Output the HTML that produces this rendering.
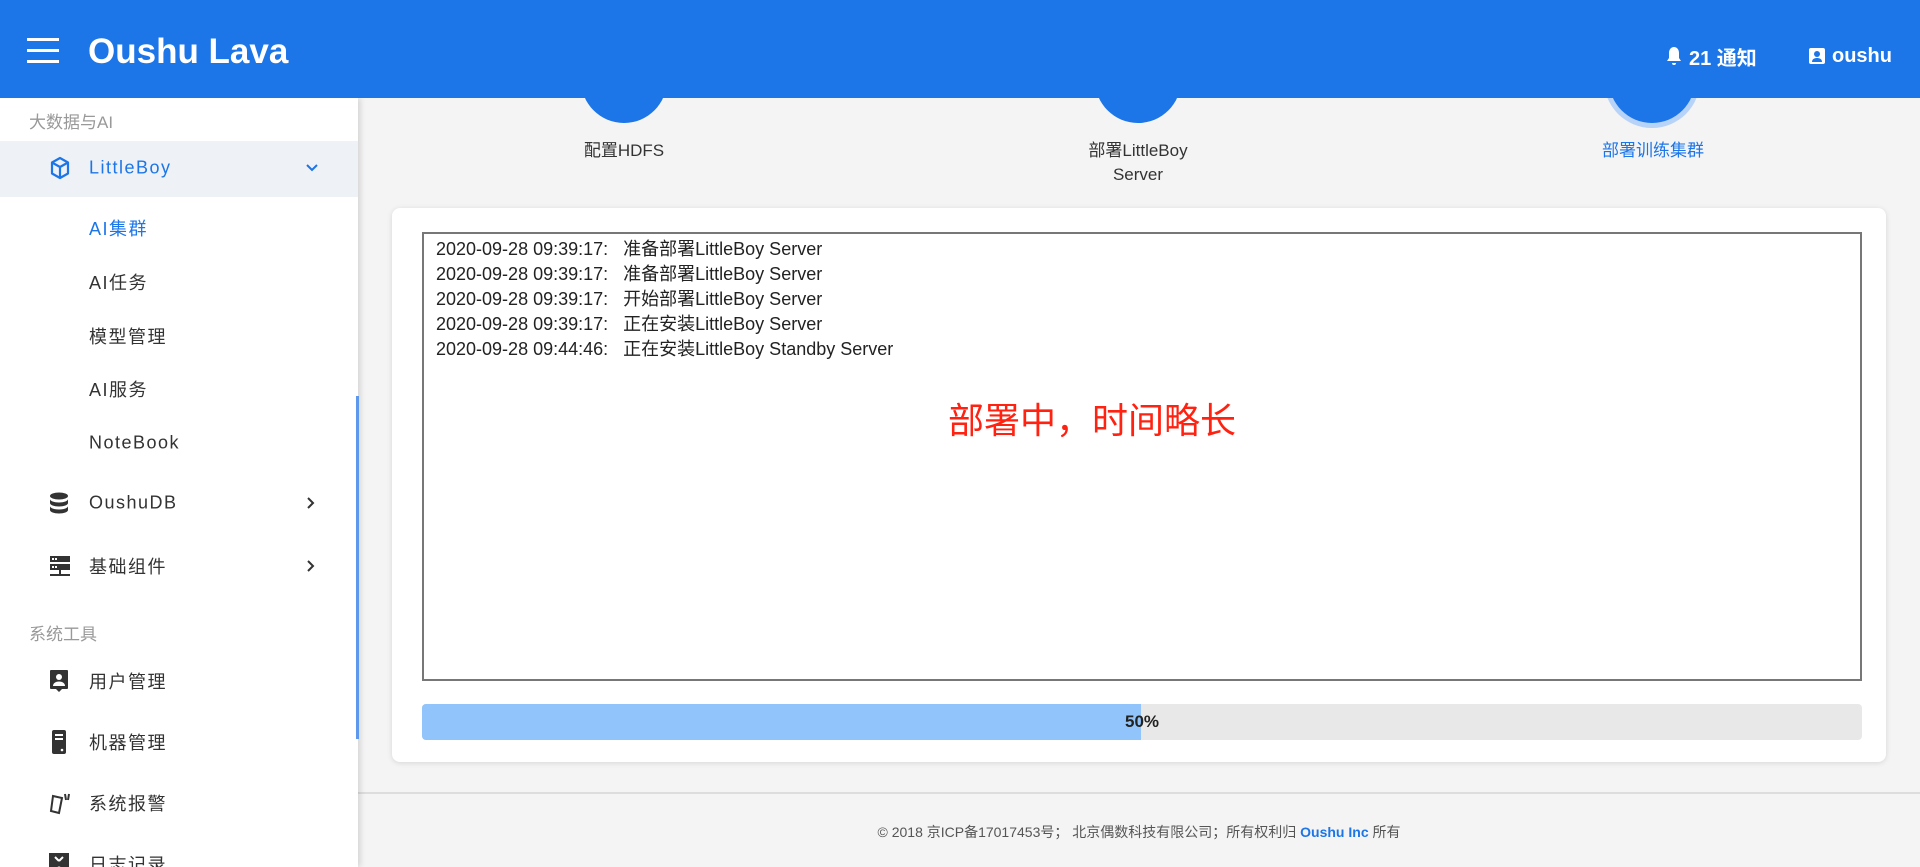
<!DOCTYPE html>
<html><head><meta charset="utf-8"><style>
*{margin:0;padding:0;box-sizing:border-box}
body{width:1920px;height:867px;overflow:hidden;background:#f4f4f4;font-family:"Liberation Sans","Noto Sans CJK SC",sans-serif;position:relative}
.hdr{position:absolute;left:0;top:0;width:1920px;height:98px;background:#1c76e8;color:#fff;z-index:3}
.ham{position:absolute;left:27px;top:38px;width:32px}
.ham i{display:block;height:3px;background:#fff;margin-bottom:8px}
.logo{position:absolute;left:88px;top:32px;font-size:35px;font-weight:bold}
.hr{position:absolute;top:44px;height:24px;font-size:20px;font-weight:bold;display:flex;align-items:center;gap:6px}
.side{position:absolute;left:0;top:98px;width:358px;height:769px;background:#fff;box-shadow:2px 0 6px rgba(0,0,0,.15);z-index:2;overflow:hidden}
.sb{position:absolute;left:356px;top:396px;width:3px;height:343px;background:#5d98ec}
.grp{position:absolute;left:29px;font-size:17px;color:#999}
.it{position:absolute;left:89px;font-size:18px;color:#333;letter-spacing:1.5px;transform:translateY(-50%)}
.ic{position:absolute;left:49px;transform:translateY(-50%)}
.chev{position:absolute;left:304px;transform:translateY(-50%)}
.circ{position:absolute;width:86px;height:86px;border-radius:50%;background:#1c76e8;top:37px;z-index:1}
.lbl{position:absolute;font-size:17px;color:#333;text-align:center;line-height:24px;transform:translateX(-50%)}
.card{position:absolute;left:392px;top:208px;width:1494px;height:554px;background:#fff;border-radius:8px;box-shadow:0 1px 6px rgba(0,0,0,.12)}
.log{position:absolute;left:422px;top:232px;width:1440px;height:449px;border:2px solid #777;background:#fff}
.ln{position:absolute;left:12px;font-size:18px;color:#222;white-space:pre}
.red{position:absolute;left:-52px;width:1440px;text-align:center;top:158px;font-size:36px;color:#f21}
.bar{position:absolute;left:422px;top:704px;width:1440px;height:36px;background:#e8e8e8;border-radius:4px;overflow:hidden}
.fill{position:absolute;left:0;top:0;width:719px;height:36px;background:#90c4fa}
.pct{position:absolute;left:0;width:1440px;text-align:center;top:8px;font-size:17px;font-weight:bold;color:#222}
.foot{position:absolute;left:358px;top:792px;width:1562px;height:75px;border-top:2px solid #ddd;text-align:center;font-size:14px;color:#555;padding-top:28px}
</style></head><body>
<div class="hdr">
<div class="ham"><i></i><i></i><i></i></div>
<div class="logo">Oushu Lava</div>
<div class="hr" style="left:1665px"><svg width="18" height="20" viewBox="0 0 18 20"><path d="M9 1c-3 0-5 2.5-5 6v5l-2 3h14l-2-3V7c0-3.5-2-6-5-6zM7 17a2 2 0 0 0 4 0z" fill="#fff"/></svg><span>21 通知</span></div>
<div class="hr" style="left:1808px"><svg width="18" height="18" viewBox="0 0 18 18"><rect x="1" y="1" width="16" height="16" rx="2" fill="#fff"/><circle cx="9" cy="7" r="3" fill="#1c76e8"/><path d="M4 15c0-3 2.5-4 5-4s5 1 5 4z" fill="#1c76e8"/></svg><span>oushu</span></div>
</div>
<div class="side">
<div class="grp" style="top:10px">大数据与AI</div>
<div style="position:absolute;left:0;top:43px;width:358px;height:56px;background:#eef1f5"></div>
<svg class="ic" style="top:70px" width="22" height="24" viewBox="0 0 22 24"><path d="M11 2l8 4.5v11L11 22l-8-4.5v-11zM3 6.5l8 4.5 8-4.5M11 11v11" fill="none" stroke="#1c76e8" stroke-width="2.2" stroke-linejoin="round"/></svg>
<div class="it" style="top:70px;color:#1c76e8">LittleBoy</div>
<svg class="chev" style="top:70px" width="16" height="12" viewBox="0 0 16 12"><path d="M3 3l5 5 5-5" fill="none" stroke="#1c76e8" stroke-width="2"/></svg>
<div class="it" style="top:130px;left:89px;color:#1c76e8">AI集群</div>
<div class="it" style="top:184px">AI任务</div>
<div class="it" style="top:238px">模型管理</div>
<div class="it" style="top:291px">AI服务</div>
<div class="it" style="top:345px">NoteBook</div>
<svg class="ic" style="top:405px" width="20" height="22" viewBox="0 0 20 22"><ellipse cx="10" cy="4" rx="9" ry="3.5" fill="#333"/><path d="M1 7c0 2 4 3.5 9 3.5s9-1.5 9-3.5v4c0 2-4 3.5-9 3.5S1 13 1 11zM1 14c0 2 4 3.5 9 3.5s9-1.5 9-3.5v4c0 2-4 3.5-9 3.5S1 20 1 18z" fill="#333"/></svg>
<div class="it" style="top:405px">OushuDB</div>
<svg class="chev" style="top:405px" width="12" height="16" viewBox="0 0 12 16"><path d="M4 3l5 5-5 5" fill="none" stroke="#333" stroke-width="2"/></svg>
<svg class="ic" style="top:468px" width="22" height="22" viewBox="0 0 22 22"><rect x="1" y="1" width="20" height="6" fill="#333"/><rect x="1" y="9" width="20" height="6" fill="#333"/><rect x="3" y="3" width="2" height="2" fill="#fff"/><rect x="6" y="3" width="2" height="2" fill="#fff"/><rect x="3" y="11" width="2" height="2" fill="#fff"/><rect x="6" y="11" width="2" height="2" fill="#fff"/><path d="M11 15v4M1 20h20" stroke="#333" stroke-width="2"/></svg>
<div class="it" style="top:468px">基础组件</div>
<svg class="chev" style="top:468px" width="12" height="16" viewBox="0 0 12 16"><path d="M4 3l5 5-5 5" fill="none" stroke="#333" stroke-width="2"/></svg>
<div class="grp" style="top:522px">系统工具</div>
<svg class="ic" style="top:583px" width="20" height="24" viewBox="0 0 20 24"><path d="M2 1h16a1 1 0 0 1 1 1v17a1 1 0 0 1-1 1h-5l-3 3-3-3H2a1 1 0 0 1-1-1V2a1 1 0 0 1 1-1z" fill="#333"/><circle cx="10" cy="8" r="3" fill="#fff"/><path d="M4 17c0-3 3-4.5 6-4.5s6 1.5 6 4.5z" fill="#fff"/></svg>
<div class="it" style="top:583px">用户管理</div>
<svg class="ic" style="top:644px;left:52px" width="14" height="24" viewBox="0 0 14 24"><rect x="0" y="0" width="14" height="24" rx="2" fill="#333"/><rect x="3" y="4" width="8" height="2" fill="#fff"/><rect x="3" y="8" width="8" height="2" fill="#fff"/><circle cx="10" cy="20" r="1.3" fill="#fff"/></svg>
<div class="it" style="top:644px">机器管理</div>
<svg class="ic" style="top:705px" width="24" height="24" viewBox="0 0 24 24"><path d="M4 5l9 2-3 15-8-2z" fill="none" stroke="#333" stroke-width="2"/><path d="M16 3l1 6M20 3l-1 6" stroke="#333" stroke-width="2"/></svg>
<div class="it" style="top:705px">系统报警</div>
<svg class="ic" style="top:766px" width="20" height="22" viewBox="0 0 20 22"><rect x="0" y="0" width="20" height="22" fill="#333"/><path d="M6 4l4 4M14 4l-4 4M6 18l4-4M14 18l-4-4" stroke="#fff" stroke-width="2"/></svg>
<div class="it" style="top:766px">日志记录</div>
</div>
<div class="sb" style="z-index:3"></div>
<div class="circ" style="left:581px"></div>
<div class="circ" style="left:1095px"></div>
<div class="circ" style="left:1609px;box-shadow:0 0 0 5px #b8d3f8"></div>
<div class="lbl" style="left:624px;top:139px">配置HDFS</div>
<div class="lbl" style="left:1138px;top:139px">部署LittleBoy<br>Server</div>
<div class="lbl" style="left:1653px;top:139px;color:#1c76e8">部署训练集群</div>
<div class="card"></div>
<div class="log">
<div class="ln" style="top:1px">2020-09-28 09:39:17:   准备部署LittleBoy Server</div>
<div class="ln" style="top:26px">2020-09-28 09:39:17:   准备部署LittleBoy Server</div>
<div class="ln" style="top:51px">2020-09-28 09:39:17:   开始部署LittleBoy Server</div>
<div class="ln" style="top:76px">2020-09-28 09:39:17:   正在安装LittleBoy Server</div>
<div class="ln" style="top:101px">2020-09-28 09:44:46:   正在安装LittleBoy Standby Server</div>
<div class="red">部署中，时间略长</div>
</div>
<div class="bar"><div class="fill"></div><div class="pct">50%</div></div>
<div class="foot">© 2018 京ICP备17017453号；  北京偶数科技有限公司；所有权利归 <b style="color:#1c76e8">Oushu Inc</b> 所有</div>
</body></html>
